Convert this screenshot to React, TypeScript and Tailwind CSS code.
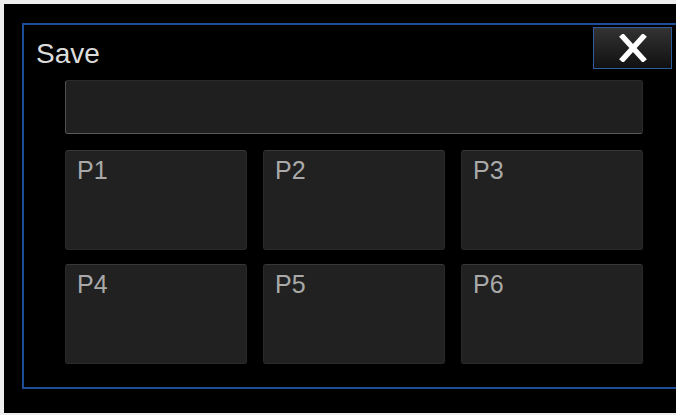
import React from "react";

const tiles = [["P1", "P2", "P3"], ["P4", "P5", "P6"]];

export default function App() {
  return (
    <div className="w-[676px] h-[415px] bg-[#eeeeee] pt-[4px] pl-[4px] pb-[2px] flex" style={{ fontFamily: '"Liberation Sans", Arial, sans-serif' }}>
      <div className="flex-1 bg-black pl-[18px] pt-[19px] pb-[24px] flex flex-col">
        <div className="flex-1 border-l-2 border-t-2 border-b-2 border-[#1c4d96] flex flex-col">
          <div className="flex justify-between items-start pt-[2px] pr-[4px]">
            <div className="mt-[11px] ml-[12px] text-[28px] leading-[32px] text-[#dcdcdc]">Save</div>
            <button className="w-[79px] h-[42px] border border-[#2f5c9c] bg-gradient-to-b from-[#333333] to-[#111111] flex items-center justify-center">
              <svg width="28" height="28" viewBox="0 0 28 28">
                <path d="M4 3 L24 25 M24 3 L4 25" stroke="#ffffff" strokeWidth="5.5" strokeLinecap="square" />
              </svg>
            </button>
          </div>
          <div className="pl-[41px] pr-[33px] flex flex-col">
            <div className="mt-[10px] h-[54px] bg-[#1f1f1f] rounded-[3px] border border-[#2a2a2a] border-l-[#505050] border-b-[#5a5a5a]" />
            <div className="mt-[16px] grid grid-cols-3 gap-x-[16px] gap-y-[14px]">
              {tiles.flat().map((t) => (
                <div key={t} className="h-[100px] bg-[#212121] rounded-[3px] border border-[#2a2a2a] border-t-[#383838] pl-[11px] pt-[5px]">
                  <span className="text-[25px] leading-[28px] text-[#a9a9a9]">{t}</span>
                </div>
              ))}
            </div>
          </div>
        </div>
      </div>
    </div>
  );
}
